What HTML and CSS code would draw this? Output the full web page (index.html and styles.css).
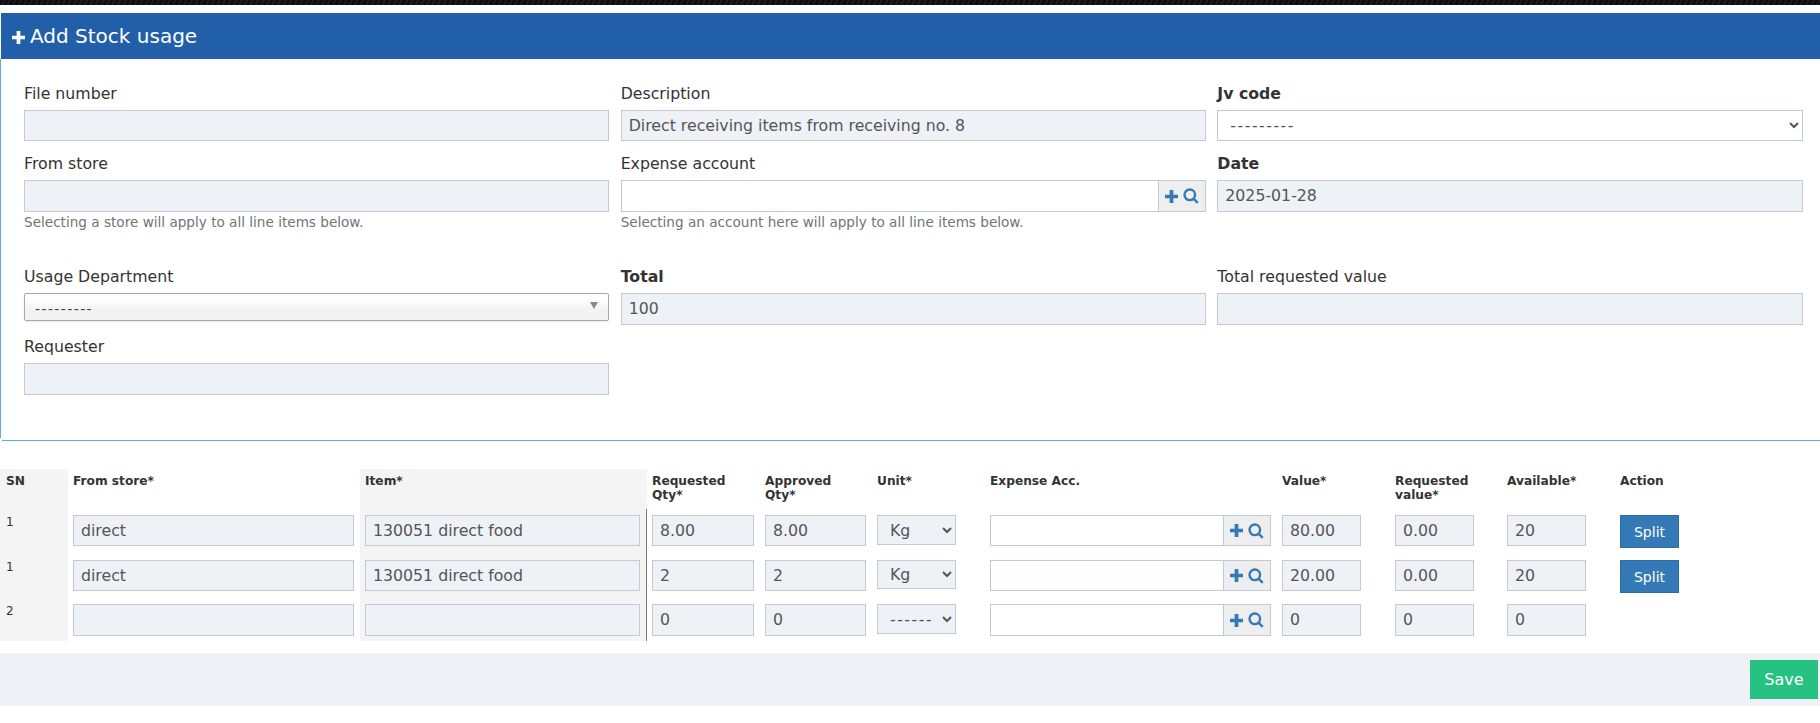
FILE: index.html
```html
<!DOCTYPE html>
<html lang="en">
<head>
    <meta charset="UTF-8">
    <meta name="viewport" content="width=device-width, initial-scale=1.0">
    <title>Add Stock usage</title>
    <link rel="stylesheet" href="styles.css">
</head>
<body>
    <div class="top-strip"></div>

    <div class="panel">
        <div class="panel-title">
            <svg class="title-plus" viewBox="0 0 14 14"><path d="M5 0h4v5h5v4H9v5H5V9H0V5h5z"/></svg>
            <span>Add Stock usage</span>
        </div>
        <div class="panel-body">
            <div class="form-grid">
                <div class="field">
                    <label>File number</label>
                    <input class="input short" type="text" readonly>
                </div>
                <div class="field">
                    <label>Description</label>
                    <input class="input short" type="text" value="Direct receiving items from receiving no. 8" readonly>
                </div>
                <div class="field">
                    <label class="strong">Jv code</label>
                    <select class="select jv-select dashes"><option>---------</option></select>
                </div>

                <div class="field">
                    <label>From store</label>
                    <input class="input" type="text" readonly>
                    <p class="help">Selecting a store will apply to all line items below.</p>
                </div>
                <div class="field">
                    <label>Expense account</label>
                    <div class="input-group">
                        <input class="input editable" type="text">
                        <span class="addon">
                            <svg class="icon-plus" viewBox="0 0 14 14"><path d="M5 0h4v5h5v4H9v5H5V9H0V5h5z"/></svg>
                            <svg class="icon-search" viewBox="0 0 16 16"><circle cx="6.8" cy="6.8" r="5.3"/><path d="M10.8 10.8l4 4"/></svg>
                        </span>
                    </div>
                    <p class="help">Selecting an account here will apply to all line items below.</p>
                </div>
                <div class="field">
                    <label class="strong">Date</label>
                    <input class="input" type="text" value="2025-01-28" readonly>
                </div>

                <div class="field">
                    <label>Usage Department</label>
                    <div class="select2">
                        <span>---------</span>
                        <i class="select2-arrow"></i>
                    </div>
                </div>
                <div class="field">
                    <label class="strong">Total</label>
                    <input class="input" type="text" value="100" readonly>
                </div>
                <div class="field">
                    <label>Total requested value</label>
                    <input class="input" type="text" readonly>
                </div>

                <div class="field">
                    <label>Requester</label>
                    <input class="input" type="text" readonly>
                </div>
            </div>
        </div>
        <div class="panel-rule"></div>
    </div>

    <table class="lines">
        <colgroup>
            <col class="c-sn">
            <col class="c-store">
            <col class="c-item">
            <col class="c-wide">
            <col class="c-thin">
            <col class="c-wide">
            <col class="c-store">
            <col class="c-wide">
            <col class="c-thin">
            <col class="c-wide">
            <col class="c-action">
        </colgroup>
        <thead>
            <tr>
                <th class="shade sn">SN</th>
                <th>From store*</th>
                <th class="shade">Item*</th>
                <th>Requested Qty*</th>
                <th>Approved<br>Qty*</th>
                <th>Unit*</th>
                <th>Expense Acc.</th>
                <th>Value*</th>
                <th>Requested value*</th>
                <th>Available*</th>
                <th>Action</th>
            </tr>
        </thead>
        <tbody>
            <tr>
                <td class="shade sn">1</td>
                <td><input class="input short" type="text" value="direct" readonly></td>
                <td class="shade item"><input class="input short" type="text" value="130051 direct food" readonly></td>
                <td><input class="input short" type="text" value="8.00" readonly></td>
                <td><input class="input short" type="text" value="8.00" readonly></td>
                <td><select class="select unit"><option>Kg</option></select></td>
                <td>
                    <div class="input-group acc short-group">
                        <input class="input editable" type="text">
                        <span class="addon">
                            <svg class="icon-plus" viewBox="0 0 14 14"><path d="M5 0h4v5h5v4H9v5H5V9H0V5h5z"/></svg>
                            <svg class="icon-search" viewBox="0 0 16 16"><circle cx="6.8" cy="6.8" r="5.3"/><path d="M10.8 10.8l4 4"/></svg>
                        </span>
                    </div>
                </td>
                <td><input class="input short narrow" type="text" value="80.00" readonly></td>
                <td><input class="input short narrow" type="text" value="0.00" readonly></td>
                <td><input class="input short narrow" type="text" value="20" readonly></td>
                <td><button class="btn-split">Split</button></td>
            </tr>
            <tr>
                <td class="shade sn">1</td>
                <td><input class="input short" type="text" value="direct" readonly></td>
                <td class="shade item"><input class="input short" type="text" value="130051 direct food" readonly></td>
                <td><input class="input short" type="text" value="2" readonly></td>
                <td><input class="input short" type="text" value="2" readonly></td>
                <td><select class="select unit unit-low"><option>Kg</option></select></td>
                <td>
                    <div class="input-group acc short-group">
                        <input class="input editable" type="text">
                        <span class="addon">
                            <svg class="icon-plus" viewBox="0 0 14 14"><path d="M5 0h4v5h5v4H9v5H5V9H0V5h5z"/></svg>
                            <svg class="icon-search" viewBox="0 0 16 16"><circle cx="6.8" cy="6.8" r="5.3"/><path d="M10.8 10.8l4 4"/></svg>
                        </span>
                    </div>
                </td>
                <td><input class="input short narrow" type="text" value="20.00" readonly></td>
                <td><input class="input short narrow" type="text" value="0.00" readonly></td>
                <td><input class="input short narrow" type="text" value="20" readonly></td>
                <td><button class="btn-split">Split</button></td>
            </tr>
            <tr>
                <td class="shade sn">2</td>
                <td><input class="input" type="text" readonly></td>
                <td class="shade item"><input class="input" type="text" readonly></td>
                <td><input class="input" type="text" value="0" readonly></td>
                <td><input class="input" type="text" value="0" readonly></td>
                <td><select class="select unit dashes"><option>---------</option></select></td>
                <td>
                    <div class="input-group acc">
                        <input class="input editable" type="text">
                        <span class="addon">
                            <svg class="icon-plus" viewBox="0 0 14 14"><path d="M5 0h4v5h5v4H9v5H5V9H0V5h5z"/></svg>
                            <svg class="icon-search" viewBox="0 0 16 16"><circle cx="6.8" cy="6.8" r="5.3"/><path d="M10.8 10.8l4 4"/></svg>
                        </span>
                    </div>
                </td>
                <td><input class="input narrow" type="text" value="0" readonly></td>
                <td><input class="input narrow" type="text" value="0" readonly></td>
                <td><input class="input narrow" type="text" value="0" readonly></td>
                <td></td>
            </tr>
        </tbody>
    </table>

    <div class="form-footer">
        <button class="btn-save">Save</button>
    </div>
</body>
</html>
```

FILE: styles.css
```css
* {
    box-sizing: border-box;
}

body {
    margin: 0;
    background-color: #fff;
    color: #333;
    font-family: "DejaVu Sans", Verdana, sans-serif;
    font-size: 15.75px;
}

.top-strip {
    height: 5px;
    background: repeating-linear-gradient(115deg, #0e0e0e 0 3px, #1c1c1c 3px 5px);
}

.panel {
    margin-top: 8px;
}

.panel-title {
    display: flex;
    align-items: center;
    gap: 5px;
    height: 46px;
    margin-left: 1px;
    padding-left: 11px;
    background-color: #225fa9;
    color: #fff;
    font-size: 20px;
}

.title-plus {
    width: 13px;
    height: 13px;
    margin-top: 3px;
    fill: #fff;
}

.panel-body {
    height: 379px;
    padding: 24px 11px 0 18px;
    border-left: 1px solid #5cace0;
}

.panel-rule {
    margin: 2px 0 0 2px;
    border-top: 1px solid #5cace0;
}

.form-grid {
    display: grid;
    grid-template-columns: repeat(3, 1fr);
    align-items: start;
}

.field {
    padding: 0 6px 0 5px;
    margin-bottom: 11px;
}

.field:nth-child(3n+1) {
    padding-right: 7px;
}

.field label {
    display: block;
    height: 21px;
    margin-bottom: 6px;
    padding-top: 1px;
    line-height: 20px;
}

.field label.strong {
    font-weight: bold;
}

.input {
    display: block;
    width: 100%;
    height: 32px;
    padding: 0 7px 1px;
    border: 1px solid #c2cad8;
    border-radius: 0;
    outline: none;
    background-color: #eef1f5;
    color: #555;
    font-family: inherit;
    font-size: 15.75px;
}

.input.short {
    height: 31px;
    margin-bottom: 1px;
}

.input.editable {
    background-color: #fff;
}

.input.narrow {
    width: 79px;
}

.select {
    display: block;
    width: 100%;
    height: 30px;
    padding: 0 8px;
    border: 1px solid #c2cad8;
    border-radius: 0;
    background-color: #fff;
    color: #555;
    font-family: inherit;
    font-size: 15.75px;
}

.select.dashes {
    letter-spacing: 1.5px;
}

.jv-select {
    height: 31px;
    margin-bottom: 1px;
}

.select.unit {
    width: 79px;
    background-color: #eef1f5;
}

.select.unit-low {
    height: 29px;
}

.input-group {
    display: flex;
}

.input-group .input {
    flex: 1;
    min-width: 0;
}

.input-group.short-group .input,
.input-group.short-group .addon {
    height: 31px;
}

.addon {
    display: flex;
    align-items: center;
    justify-content: center;
    gap: 5px;
    width: 47px;
    height: 32px;
    border: 1px solid #c2cad8;
    border-left: none;
    background-color: #eee;
}

.icon-plus {
    width: 13px;
    height: 13px;
    fill: #337ab7;
}

.icon-search {
    width: 16px;
    height: 16px;
    fill: none;
    stroke: #337ab7;
    stroke-width: 2.4;
}

.help {
    margin: 0;
    height: 20px;
    color: #737373;
    font-size: 13.6px;
    line-height: 20px;
}

.field:nth-child(5) .help,
.field:nth-child(4) .help {
    margin-bottom: 23px;
}

.select2 {
    display: flex;
    align-items: center;
    justify-content: space-between;
    height: 28px;
    margin-bottom: 4px;
    padding: 3px 10px 0 10px;
    border: 1px solid #aaa;
    border-radius: 2px;
    background: linear-gradient(#fff 20%, #f3f3f3 55%);
    box-shadow: 0 1px 2px rgba(0, 0, 0, 0.1);
    color: #444;
    font-size: 14px;
    letter-spacing: 1.4px;
}

.select2-arrow {
    width: 0;
    height: 0;
    margin-top: -6px;
    border-left: 4px solid transparent;
    border-right: 4px solid transparent;
    border-top: 7px solid #888;
}

.lines {
    width: 1820px;
    margin-top: 28px;
    border-collapse: separate;
    border-spacing: 0;
    table-layout: fixed;
}

.c-sn { width: 68px; }
.c-store { width: 292px; }
.c-item { width: 287px; }
.c-wide { width: 113px; }
.c-thin { width: 112px; }
.c-action { width: 205px; }

.lines th {
    height: 40px;
    padding: 5px;
    vertical-align: top;
    text-align: left;
    font-size: 12.2px;
    line-height: 14px;
}

.lines td {
    padding: 6px 6px 5px 5px;
    vertical-align: top;
    font-size: 12px;
}

.lines tbody tr:first-child td {
    padding-bottom: 6px;
}

.lines .sn {
    padding-left: 6px;
}

.shade {
    background-color: #f4f4f4;
}

.lines td.item {
    border-right: 1px solid #777;
}

.acc {
    width: 281px;
}

.btn-split {
    width: 59px;
    height: 33px;
    padding: 0;
    border: 1px solid #2e6da4;
    background-color: #337ab7;
    color: #fff;
    font-family: inherit;
    font-size: 14px;
}

.form-footer {
    display: flex;
    justify-content: flex-end;
    height: 53px;
    margin-top: 12px;
    padding: 7px 2px 0 0;
    background-color: #eef1f5;
}

.btn-save {
    width: 68px;
    height: 39px;
    padding: 0;
    border: none;
    background-color: #26c281;
    color: #fff;
    font-family: inherit;
    font-size: 16px;
}
```
